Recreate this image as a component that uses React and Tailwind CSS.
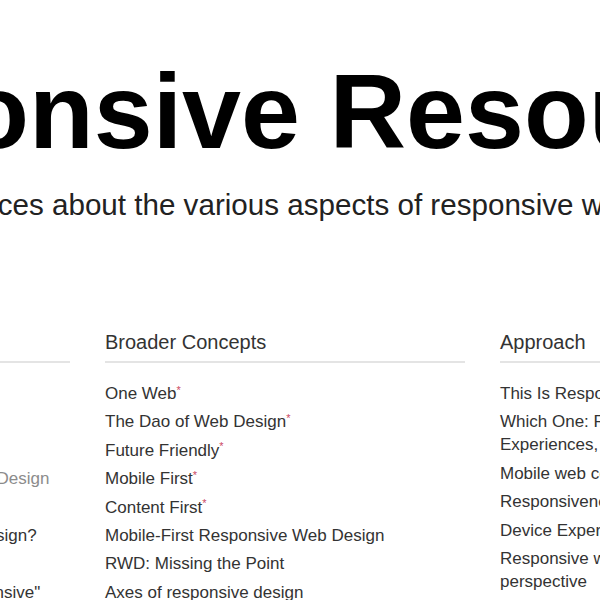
import React from 'react';

const columns = [
    {
        title: 'Introduction',
        items: [
            { text: 'Responsive Web Design', star: true },
            { text: 'Responsive Web Design (the book)' },
            { text: 'A Responsive Design Primer' },
            { text: "Beginner's Guide to Responsive Web Design", muted: true },
            { text: 'Fluid Grids' },
            { text: 'Why You Need a Responsive Web Design?' },
            { text: 'Responsive Design Principles' },
            { text: 'Defining What It Means To Be "Responsive"' },
        ],
    },
    {
        title: 'Broader Concepts',
        items: [
            { text: 'One Web', star: true },
            { text: 'The Dao of Web Design', star: true },
            { text: 'Future Friendly', star: true },
            { text: 'Mobile First', star: true },
            { text: 'Content First', star: true },
            { text: 'Mobile-First Responsive Web Design' },
            { text: 'RWD: Missing the Point' },
            { text: 'Axes of responsive design' },
        ],
    },
    {
        title: 'Approach',
        items: [
            { text: 'This Is Responsive' },
            { text: 'Which One: Responsive Design, Device Experiences, or RESS?' },
            { text: 'Mobile web content adaptation techniques' },
            { text: 'Responsiveness Done Right' },
            { text: 'Device Experiences & Responsive Design' },
            { text: 'Responsive web design: a project-management', rest: 'perspective' },
        ],
    },
];

const Column = ({ title, items }) => (
    <div>
        <h2 className="text-[20px] leading-[28px] pb-[5px] border-b-2 border-[#e4e4e4] text-[#333]">
            {title}
        </h2>
        <ul className="mt-[19px] flex flex-col gap-[5.4px] text-[17px] leading-[23px]">
            {items.map((item) => (
                <li key={item.text} className={item.muted ? 'text-[#8c8c8c]' : 'text-[#333]'}>
                    {item.rest ? (
                        <>
                            <span className="whitespace-nowrap">{item.text}</span> {item.rest}
                        </>
                    ) : (
                        item.text
                    )}
                    {item.star && <sup className="text-[11px] text-[#cc4a62]">*</sup>}
                </li>
            ))}
        </ul>
    </div>
);

const App = () => {
    return (
        <div className="w-full min-h-[600px] overflow-hidden bg-white font-['Liberation_Sans',Arial,sans-serif]">
            <div className="w-[1150px] ml-[-290px] pt-[58px]">
                <h1 className="ml-[-5px] text-[106px] leading-none font-bold text-black whitespace-nowrap">
                    Responsive Resources
                </h1>
                <p className="mt-[23px] pl-[13px] text-[29.6px] leading-[35px] text-[#222] whitespace-nowrap">
                    A collection of resources about the various aspects of responsive web design.
                </p>

                {/* three columns, the first one mostly off the left edge */}
                <div className="mt-[106px] grid grid-cols-3 gap-x-[35px]">
                    {columns.map((col) => (
                        <Column key={col.title} title={col.title} items={col.items} />
                    ))}
                </div>
            </div>
        </div>
    );
};

export default App;
